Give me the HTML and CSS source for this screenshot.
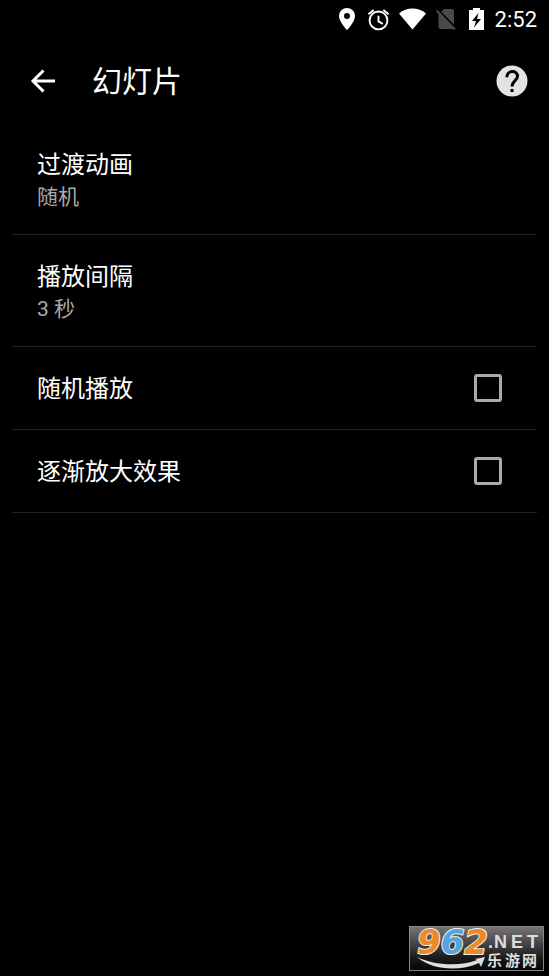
FILE: index.html
```html
<!DOCTYPE html>
<html lang="zh-CN">
<head>
<meta charset="utf-8">
<meta name="viewport" content="width=device-width, initial-scale=1">
<title>幻灯片</title>
<link rel="stylesheet" href="styles.css">
</head>
<body>
<div class="status">
  <svg class="pin" viewBox="0 0 16 22" aria-hidden="true"><path fill="#fff" fill-rule="evenodd" d="M8 0a8 8 0 0 0-8 8c0 6 8 14 8 14s8-8 8-14a8 8 0 0 0-8-8zm0 5a3 3 0 1 1 0 6 3 3 0 0 1 0-6z"/></svg>
  <svg class="alarm" viewBox="0 0 24 24" aria-hidden="true"><g fill="none" stroke="#fff" stroke-width="2"><circle cx="12" cy="13" r="9.300"/><path d="M1.500 6.400 7 2M22.500 6.400 17 2"/><path d="M12 8v6l4.500 2.600"/></g></svg>
  <svg class="wifi" viewBox="0 0 28 22" aria-hidden="true"><path fill="#fff" d="M14 22 0 5.200C8-1.600 20-1.600 28 5.200z"/></svg>
  <svg class="sim" viewBox="0 0 22 22" aria-hidden="true"><path fill="#4a4a4a" d="M9 1h8a2 2 0 0 1 2 2v15L5.500 4.500zM3.500 5.200 18.500 20.500q-.5.500-1 .5H5.500a2 2 0 0 1-2-2z"/><path d="m2.500 1.500 18 18" fill="none" stroke="#000" stroke-width="2"/><path d="m1.500 2.500 18.500 19" fill="none" stroke="#4a4a4a" stroke-width="2"/></svg>
  <svg class="battery" viewBox="0 0 15 22" aria-hidden="true"><path fill="#fff" fill-rule="evenodd" d="M4 0h7v2h4v20H0V2h4zM9.500 5 3 13h4l-2 6.500L12 11H8z"/></svg>
  <time class="clock">2:52</time>
</div>
<header class="bar">
  <button class="icon-button" aria-label="返回"><svg viewBox="0 0 26 24" class="arrow"><path d="M25 12H3M13.500 1.500 3 12l10.500 10.500" fill="none" stroke="#fff" stroke-width="3"/></svg></button>
  <h1>幻灯片</h1>
  <button class="icon-button" aria-label="帮助"><svg viewBox="0 0 32 32" class="help"><circle cx="16" cy="16" r="15.500" fill="#e2e2e2"/><path d="M10.800 12.300C10.800 4.800 21.500 4.800 21.500 11.300c0 4.200-5.500 4.700-5.500 10.200" fill="none" stroke="#000" stroke-width="3"/><path d="M14.500 24h3v3h-3z"/></svg></button>
</header>
<main class="settings">
  <button class="row double"><span class="title">过渡动画</span><span class="value">随机</span></button>
  <button class="row double"><span class="title">播放间隔</span><span class="value">3 秒</span></button>
  <label class="row single"><span class="title">随机播放</span><input type="checkbox"></label>
  <label class="row single"><span class="title">逐渐放大效果</span><input type="checkbox"></label>
</main>
<footer class="footer">
  <a class="brand" href="#" aria-label="962.NET 乐游网">
    <svg viewBox="0 0 135 45">
      <defs><linearGradient id="steel" x2="0" y2="1"><stop stop-color="#777"/><stop offset=".7" stop-color="#1c1c1c"/><stop offset="1" stop-color="#050505"/></linearGradient></defs>
      <rect x=".5" y=".5" width="134" height="44" fill="url(#steel)" stroke="#858585"/>
      <path d="M8 31c16 8 42 10 60 3l-2-1 10-2-4 10-2-4C50 46 23 44 8 31z" fill="#ddd"/>
      <text class="digits" x="8" y="28">9<tspan class="blue">6</tspan>2</text>
      <text class="net" x="79 85 102 118" y="22">.NET</text>
      <text class="cn" x="78 96 113" y="40">乐游网</text>
    </svg>
  </a>
</footer>
</body>
</html>
```
FILE: styles.css
```css
* { box-sizing: border-box; }
body { margin: 0; min-height: 100vh; display: flex; flex-direction: column; background: #000; color: #fff; font-family: Roboto, "Noto Sans CJK SC", sans-serif; }
button { font: inherit; color: inherit; background: none; border: 0; padding: 0; }
svg { display: block; }
.status { height: 40px; display: flex; align-items: center; justify-content: flex-end; padding: 0 12px 2px 0; }
.pin { width: 16px; height: 22px; margin-right: 12px; }
.alarm { width: 23px; height: 23px; margin-right: 9px; }
.wifi { width: 27px; height: 22px; margin-right: 9px; }
.sim { width: 22px; height: 22px; margin-right: 12px; }
.battery { width: 15px; height: 22px; margin-right: 11px; }
.clock { font-size: 22px; line-height: 24px; padding-top: 2px; }
.bar { height: 82px; display: flex; align-items: center; padding: 0 21px 0 30px; }
.bar h1 { flex: 1; margin: 0 0 0 36px; padding-top: 2px; font-size: 30px; line-height: 40px; font-weight: 400; }
.arrow { width: 26px; height: 24px; }
.help { width: 32px; height: 32px; }
.settings { display: flex; flex-direction: column; padding: 0 12px; }
.row { display: flex; border-bottom: 1px solid #222; padding: 2px 25px 0; text-align: left; }
.double { height: 112px; padding-top: 5px; flex-direction: column; align-items: flex-start; justify-content: center; }
.double:first-child { height: 113px; }
.title { font-size: 24px; line-height: 32px; }
.value { font-size: 21px; line-height: 32px; color: #aaa; }
.single { height: 83px; align-items: center; justify-content: space-between; }
.single input { appearance: none; width: 28px; height: 28px; margin: 0 10px 2px 0; border: 3px solid #aaa; border-radius: 3px; }
.single input:checked { background: #aaa; }
.footer { margin-top: auto; padding: 0 5px 5px; display: flex; justify-content: flex-end; }
.brand svg { width: 135px; height: 45px; overflow: visible; }
.digits { font: italic bold 34px "DejaVu Sans", sans-serif; fill: #ee8a25; stroke: #eee; stroke-width: 2px; paint-order: stroke; }
.blue { fill: #55a5dc; }
.net { font: bold 18px "Liberation Sans", sans-serif; fill: #ddd; }
.cn { font: bold 15px "Noto Sans CJK SC", sans-serif; fill: #ddd; }
```
